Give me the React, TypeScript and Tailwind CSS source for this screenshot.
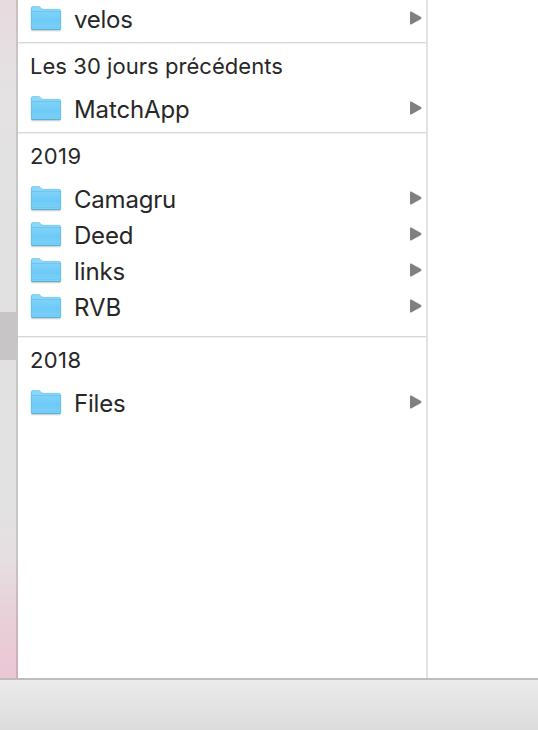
const groups = [
  { title: '', items: [{ name: 'velos', spacing: 'tracking-[-0.25px]' }], pad: 'pb-[5px]' },
  { title: 'Les 30 jours précédents', heading: 'tracking-[0.05px]', items: [{ name: 'MatchApp', spacing: 'tracking-[-0.12px]' }], pad: 'pb-[5px]' },
  {
    title: '2019',
    heading: 'tracking-[0.4px]',
    items: [
      { name: 'Camagru', spacing: 'tracking-[-0.2px]' },
      { name: 'Deed', spacing: 'tracking-[-0.2px]' },
      { name: 'links', spacing: 'tracking-[-0.1px]' },
      { name: 'RVB', spacing: 'tracking-[0px]' },
    ],
    pad: 'pb-[11px]',
  },
  { title: '2018', heading: 'tracking-[0.4px]', items: [{ name: 'Files', spacing: 'tracking-[-0.2px]' }], pad: '' },
];

function Folder() {
  return (
    <svg className="h-[28px] w-8 shrink-0" viewBox="0 0 32 28">
      <defs>
        <linearGradient id="folderFront" x1="0" y1="0" x2="0" y2="1">
          <stop offset="0" stopColor="#80d3f8" />
          <stop offset=".5" stopColor="#6dcaf6" />
          <stop offset="1" stopColor="#7dd3f8" />
        </linearGradient>
      </defs>
      <path d="M1.5 25.7h29" stroke="#000" strokeOpacity=".18" strokeWidth="1.2" />
      <path d="M1 3Q1 1.2 2.7 1.2H8.4Q9.8 1.2 10.6 2.4Q11.8 4 13 4H29.5Q31 4 31 5.5V24Q31 25 30 25H2Q1 25 1 24Z" fill="#8bd8fa" />
      <path d="M1 6.3H31V24Q31 25 30 25H2Q1 25 1 24Z" fill="url(#folderFront)" />
      <path d="M1.5 3Q1.6 1.5 3 1.5H8.4Q9.7 1.5 10.4 2.6Q11.6 4.3 13 4.3H29.5" fill="none" stroke="#72c4e9" strokeWidth=".6" />
      <path d="M1.5 6.4H30.5" stroke="#65bce5" strokeWidth=".7" />
      <path d="M1.5 22.6H30.5" stroke="#66c1eb" strokeWidth=".6" />
      <path d="M1.4 24.6H30.6" stroke="#549fc4" strokeWidth=".8" />
      <path d="M1.3 3V24M30.7 5.5V24" stroke="#59b2db" strokeWidth=".6" />
    </svg>
  );
}

function Row({ name, spacing }: { name: string; spacing: string }) {
  return (
    <div className="flex h-9 items-center pl-3 pr-1">
      <Folder />
      <span className={`ml-3 grow pt-0.5 text-[24px] leading-9 ${spacing}`}>{name}</span>
      <svg className="mb-[2px] h-[14px] w-[13px]" viewBox="0 0 13 14">
        <path d="M1 1.2Q1 0 2.2.6L12 6.1Q13 7 12 7.9L2.2 13.4Q1 14 1 12.8Z" fill="#808080" />
      </svg>
    </div>
  );
}

export default function App() {
  return (
    <div className="flex h-[730px] w-[538px] flex-col overflow-hidden bg-white font-['Inter',sans-serif] text-[#272727]">
      <div className="flex h-[678px]">
        <aside className="flex w-[18px] flex-col border-r-2 border-black/12 bg-[linear-gradient(#e8dadf_0px,#e4e2e2_90px,#e1e1e1_310px,#e3e2e2_500px,#e6dee1_560px,#e9cdd7_630px,#ecc6d4_678px)] bg-origin-border">
          <div className="mt-[312px] h-12 bg-[#c7c5c5]" />
        </aside>
        <main className="w-[410px] border-r-2 border-[#e3e3e3] pt-px">
          {groups.map((group, index) => (
            <section key={group.title} className={group.pad}>
              {index > 0 && (
                <h2 className={`h-[49px] border-t border-[#d7d7d7] pl-3 text-[22px] leading-[46px] font-normal shadow-[inset_0_1px_0_#f0f0f0] ${group.heading}`}>
                  {group.title}
                </h2>
              )}
              {group.items.map((item) => <Row key={item.name} {...item} />)}
            </section>
          ))}
        </main>
      </div>
      <footer className="h-[52px] border-t-2 border-[#bdbdbd] bg-linear-to-b from-[#ebebeb] to-[#dcdcdc]" />
    </div>
  );
}
